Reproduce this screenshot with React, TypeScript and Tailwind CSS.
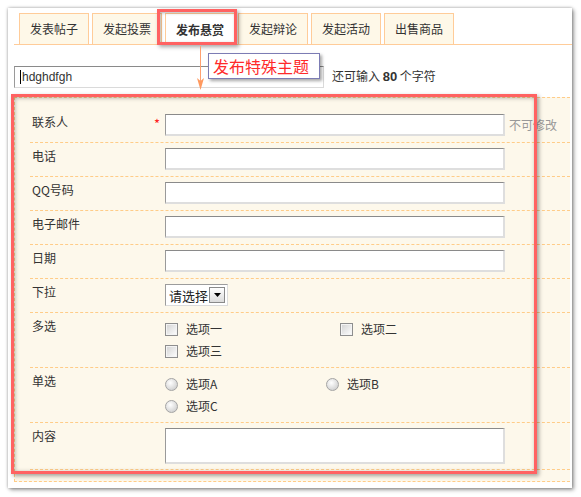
import React from "react";

const cjk = "font-['Noto_Sans_CJK_SC','Noto_Sans',sans-serif]";

const tabs = ["发表帖子", "发起投票", "发布悬赏", "发起辩论", "发起活动", "出售商品"];

const Row = ({
  label,
  required,
  tight,
  children,
}: {
  label: string;
  required?: boolean;
  tight?: boolean;
  children: React.ReactNode;
}) => (
  <div
    className={`flex border-b border-dashed border-[#ffcc88] pt-[5px] ${tight ? "pb-[5px]" : "pb-[6px]"}`}
  >
    <div className="relative w-[135px] shrink-0 pl-[2px] text-[12px] leading-[16px] text-[#333]">
      {label}
      {required && (
        <span className="absolute left-[124px] top-[2px] text-[13px] text-[#ff2020]">*</span>
      )}
    </div>
    <div className="flex-1">{children}</div>
  </div>
);

const TextBox = ({ h = "h-[22px]" }: { h?: string }) => (
  <div
    className={`w-[340px] ${h} bg-white border-t border-l border-t-[#8a8a8a] border-l-[#9a9a9a] border-r-2 border-b-2 border-r-[#dedede] border-b-[#dedede]`}
  />
);

const Check = ({ label, w }: { label: string; w: string }) => (
  <div className={`flex items-center h-[22px] ${w}`}>
    <span className="w-[13px] h-[13px] border border-[#8e8e8e] bg-gradient-to-br from-[#d2d2d2] to-white shadow-[inset_0_0_0_1px_#f4f4f4]" />
    <span className="ml-[8px] text-[12px] text-[#333]">{label}</span>
  </div>
);

const Radio = ({ label, w }: { label: string; w: string }) => (
  <div className={`flex items-center h-[22px] ${w}`}>
    <span className="w-[13px] h-[13px] rounded-full border border-[#a4a4a4] bg-[radial-gradient(circle_at_40%_35%,#ffffff,#c4c4c4)]" />
    <span className="ml-[8px] text-[12px] text-[#333]">{label}</span>
  </div>
);

export default function App() {
  return (
    <div className={`w-[581px] h-[497px] bg-white p-[8px] ${cjk}`}>
      <div className="relative w-[564px] h-[480px] bg-white shadow-[0_0_3px_rgba(0,0,0,0.35),2px_2px_4px_rgba(0,0,0,0.35)] flex flex-col">
        {/* tabs */}
        <div className="ml-[6px] mt-[5px] flex gap-[3px] pl-[5px] border-b border-[#ffcc99]">
          {tabs.map((t, i) => (
            <div
              key={t}
              className={`w-[70px] h-[31px] flex items-center justify-center border-t border-l border-r border-[#ffcc99] text-[12px] text-[#333] ${
                i === 2 ? "bg-white font-bold -mb-px h-[32px]" : "bg-[#fef8e8]"
              }`}
            >
              {t}
            </div>
          ))}
        </div>

        {/* subject */}
        <div className="ml-[6px] mt-[21px] flex items-center">
          <div className="relative w-[310px] h-[22px] bg-white border-t border-l border-t-[#8a8a8a] border-l-[#9a9a9a] border-r border-b border-r-[#dadada] border-b-[#dadada] flex items-center pl-[5px] font-['Liberation_Sans',sans-serif] text-[12px] text-[#333]">
            <span className="w-px h-[14px] bg-black mr-[1px]" />
            hdghdfgh
          </div>
          <div className="ml-[8px] text-[12px] text-[#333]">
            还可输入 <b className="font-['Liberation_Sans',sans-serif] text-[13px]">80</b> 个字符
          </div>
        </div>

        {/* form */}
        <div className="ml-[6px] mr-[2px] mt-[9px] bg-[#fdf8eb] border-l border-t border-b border-dashed border-[#ffcc88] pt-[11px] pb-[11px]">
          <div className="ml-[15px]">
            <Row label="联系人" required>
              <div className="flex items-center">
                <TextBox />
                <span className="ml-[4px] text-[12px] text-[#999]">不可修改</span>
              </div>
            </Row>
            <Row label="电话">
              <TextBox />
            </Row>
            <Row label="QQ号码">
              <TextBox />
            </Row>
            <Row label="电子邮件">
              <TextBox />
            </Row>
            <Row label="日期">
              <TextBox />
            </Row>
            <Row label="下拉">
              <div className="w-[63px] h-[22px] bg-white border border-t-[#9c9c9c] border-l-[#9c9c9c] border-r-[#dcdcdc] border-b-[#dcdcdc] flex items-center pl-[3px] pr-[2px] justify-between">
                <span className="text-[13px] leading-none text-[#222]">请选择</span>
                <span className="w-[16px] h-[16px] border border-[#8a8a8a] bg-gradient-to-b from-white to-[#dcdcdc] flex items-center justify-center">
                  <svg width="7" height="4" viewBox="0 0 7 4">
                    <path d="M0 0h7L3.5 4z" fill="#000" />
                  </svg>
                </span>
              </div>
            </Row>
            <Row label="多选" tight>
              <div className="flex flex-wrap w-[350px]">
                <Check label="选项一" w="w-[175px]" />
                <Check label="选项二" w="w-[175px]" />
                <Check label="选项三" w="w-[175px]" />
              </div>
            </Row>
            <Row label="单选" tight>
              <div className="flex flex-wrap w-[322px]">
                <Radio label="选项A" w="w-[161px]" />
                <Radio label="选项B" w="w-[161px]" />
                <Radio label="选项C" w="w-[161px]" />
              </div>
            </Row>
            <Row label="内容" tight>
              <TextBox h="h-[36px]" />
            </Row>
          </div>
        </div>

        {/* annotation overlays */}
        <div className="pointer-events-none absolute left-[149px] top-[1px] w-[80px] h-[36px] border-[3px] border-[#ff6262] shadow-[2px_2px_4px_rgba(0,0,0,0.35),inset_1px_1px_3px_rgba(0,0,0,0.3)]" />
        <div className="pointer-events-none absolute left-[191px] top-[38px] w-[3px] h-[44px] flex flex-col items-center">
          <div className="w-px flex-1 bg-[#ffa070]" />
          <svg width="7" height="12" viewBox="0 0 7 12" className="-mt-[10px]">
            <path d="M0 0L3.5 12L7 0L3.5 3z" fill="#ff9a60" />
          </svg>
        </div>
        <div className="pointer-events-none absolute left-[200px] top-[45px] w-[112px] h-[26px] bg-white border border-[#7c7cb4] shadow-[2px_2px_3px_rgba(0,0,0,0.35)] pl-[4px] pt-[2px] text-[16px] leading-[20px] text-[#ff2a2a]">
          发布特殊主题
        </div>
        <div className="pointer-events-none absolute left-[3px] top-[86px] w-[526px] h-[380px] border-[3px] border-[#ff6262] shadow-[2px_2px_4px_rgba(0,0,0,0.35),inset_1px_1px_4px_rgba(0,0,0,0.3)]" />
      </div>
    </div>
  );
}
